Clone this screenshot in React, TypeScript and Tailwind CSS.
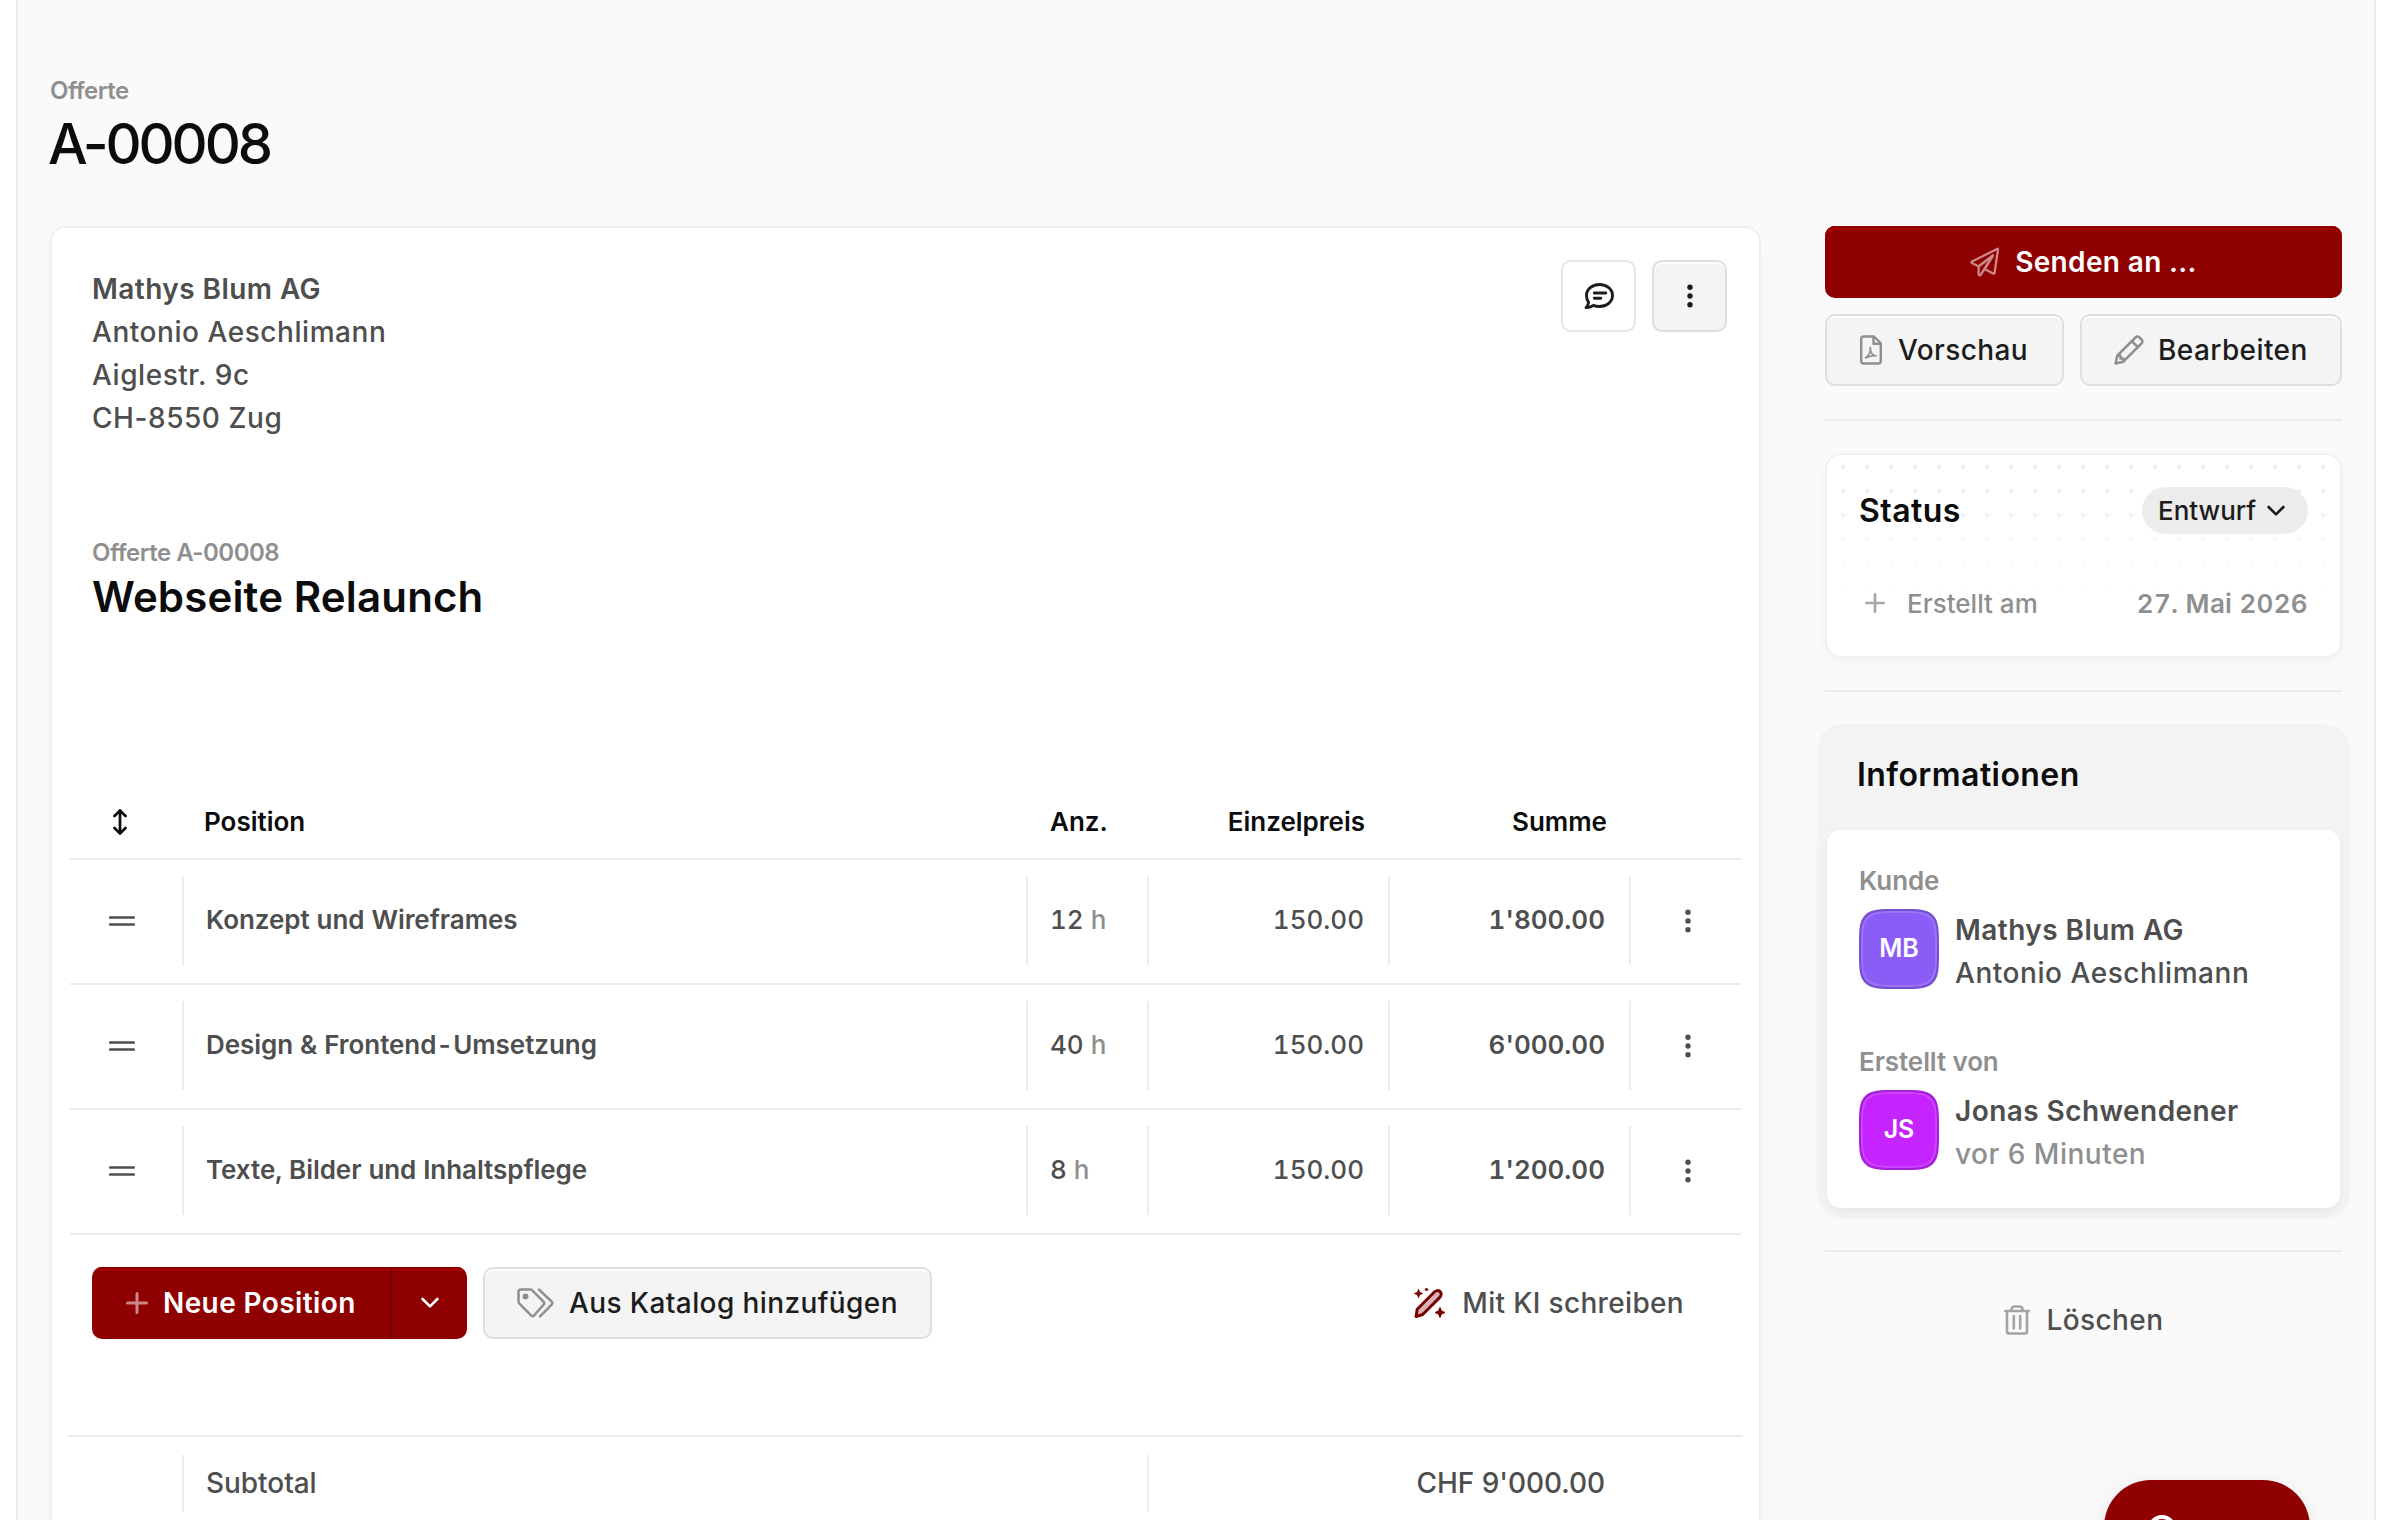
import React from 'react';

interface Position {
  title: string;
  amount: string;
  price: string;
  sum: string;
}

const positions: Position[] = [
  { title: 'Konzept und Wireframes', amount: '12', price: '150.00', sum: "1'800.00" },
  { title: 'Design & Frontend-Umsetzung', amount: '40', price: '150.00', sum: "6'000.00" },
  { title: 'Texte, Bilder und Inhaltspflege', amount: '8', price: '150.00', sum: "1'200.00" },
];

const KebabIcon: React.FC<{ className?: string }> = ({ className }) => (
  <svg className={className} width="6" height="24" viewBox="0 0 6 24" fill="currentColor">
    <circle cx="3" cy="3.200" r="2.700" />
    <circle cx="3" cy="12" r="2.700" />
    <circle cx="3" cy="20.800" r="2.700" />
  </svg>
);

const PlusIcon: React.FC<{ className?: string; size: number }> = ({ className, size }) => (
  <svg className={className} width={size} height={size} viewBox="0 0 22 22" fill="none" stroke="currentColor" strokeWidth="3" strokeLinecap="round">
    <path d="M11 1.500v19M1.500 11h19" />
  </svg>
);

const ChevronIcon: React.FC<{ className?: string }> = ({ className }) => (
  <svg className={className} width="18" height="12" viewBox="0 0 18 12" fill="none" stroke="currentColor" strokeWidth="2.600" strokeLinecap="round" strokeLinejoin="round">
    <path d="M1.600 2l7.400 7.400L16.400 2" />
  </svg>
);

const SecondaryButton: React.FC<{ className?: string; children: React.ReactNode }> = ({ className = '', children }) => (
  <button
    className={`flex items-center h-[72px] shrink-0 rounded-[10px] border-2 border-[#dedede] bg-[#f4f4f4] text-[#1c1c1c] shadow-[inset_0_2px_0_#ffffff] ${className}`}
  >
    {children}
  </button>
);

const Avatar: React.FC<{ initials: string; className: string }> = ({ initials, className }) => (
  <div
    className={`w-20 h-20 shrink-0 flex items-center justify-center rounded-[38px] [corner-shape:squircle] border-2 text-[25px] font-semibold text-white pb-0.5 shadow-[inset_0_0_0_2px_rgba(255,255,255,0.14)] ${className}`}
  >
    {initials}
  </div>
);

const OffertePage: React.FC = () => {
  return (
    <div className="w-[2392px] h-[1520px] overflow-hidden bg-white pl-4 pr-4 font-['Inter',sans-serif] text-[28px] text-[#4e4e4e]">
      <div className="relative h-full border-x-2 border-[#ebebeb] bg-[#fafafa] pl-8 pr-8 pt-[73px]">
        {/* Header */}
        <p className="text-2xl leading-9 font-semibold tracking-[-0.5px] text-[#8f8f8f]">Offerte</p>
        <h1 className="-ml-0.5 text-[56px] leading-[70px] font-medium tracking-[-3.1px] text-[#0c0c0c]">A-00008</h1>

        <div className="mt-[47px] flex items-start gap-16">
          {/* Dokument */}
          <div className="w-[1711px] h-[1400px] shrink-0 rounded-[16px] border-2 border-[#f0f0f0] bg-white shadow-[0_4px_12px_rgba(0,0,0,0.025)]">
            <div className="flex justify-between pl-10 pr-8 pt-8">
              <div className="pt-2 leading-[43px] font-[450] tracking-[0.55px]">
                <p className="font-semibold tracking-[0.44px]">Mathys Blum AG</p>
                <p>Antonio Aeschlimann</p>
                <p>Aiglestr. 9c</p>
                <p>CH-8550 Zug</p>
              </div>
              <div className="flex gap-4">
                <button className="flex h-[72px] w-[75px] items-center justify-center rounded-[10px] border-2 border-[#e6e6e6] bg-white text-[#1c1c1c]">
                  <svg width="30" height="26" viewBox="0 0 30 26" fill="none" stroke="currentColor" strokeWidth="2.900" strokeLinecap="round" strokeLinejoin="round">
                    <path d="M15.500 1.500c7.400 0 13 4.900 13 11s-5.600 11-13 11c-2.300 0-4.300-.4-6.100-1.200-1.800 1.400-4.300 2.300-7.400 2.300 1.400-1.600 2.400-3.600 2.600-5.300-1.400-1.900-2.100-4.200-2.100-6.800 0-6.100 5.600-11 13-11z" />
                    <path d="M10.300 10h11.500M10.300 15.200h6.500" />
                  </svg>
                </button>
                <SecondaryButton className="w-[75px] justify-center">
                  <KebabIcon />
                </SecondaryButton>
              </div>
            </div>

            <div className="mt-[95px] pl-10">
              <p className="text-2xl leading-9 font-semibold tracking-[-0.5px] text-[#8f8f8f]">Offerte A-00008</p>
              <h2 className="text-[42px] leading-[52px] font-semibold tracking-[0.15px] text-[#0c0c0c]">Webseite Relaunch</h2>
            </div>

            {/* Positionen */}
            <div className="mt-[162px] ml-[18px] w-[1671px] text-[26px]">
              <div className="flex h-[75px] items-center border-b-2 border-[#ececec] font-semibold text-[#0c0c0c]">
                <div className="w-28 pl-[43px]">
                  <svg width="14" height="26" viewBox="0 0 14 26" fill="none" stroke="currentColor" strokeWidth="2.700" strokeLinecap="round" strokeLinejoin="round">
                    <path d="M7 1.700v22.600M1.500 7L7 1.500 12.500 7M1.500 19L7 24.500l5.500-5.500" />
                  </svg>
                </div>
                <div className="w-[844px] pl-[22px]">Position</div>
                <div className="w-[121px] pl-6">Anz.</div>
                <div className="w-[241px] pr-[23px] text-right">Einzelpreis</div>
                <div className="w-[241px] pr-[22px] text-right">Summe</div>
              </div>

              {positions.map((p) => (
                <div key={p.title} className="flex h-[125px] items-start border-b-2 border-[#ececec] pt-4 leading-[88px] tabular-nums">
                  <div className="flex h-[89px] w-28 items-center pl-[39px]">
                    <svg width="26" height="10" viewBox="0 0 26 10" fill="none" stroke="currentColor" strokeWidth="2.700" strokeLinecap="round">
                      <path d="M1.300 1.500h23.400M1.300 8.500h23.400" />
                    </svg>
                  </div>
                  <div className="h-[89px] w-[844px] border-l-2 border-[#ececec] pl-[22px] font-semibold tracking-[-0.05px]">{p.title}</div>
                  <div className="h-[89px] w-[121px] border-l-2 border-[#ececec] pl-[22px] font-[450]">
                    {p.amount} <span className="text-[#8f8f8f]">h</span>
                  </div>
                  <div className="h-[89px] w-[241px] border-l-2 border-[#ececec] pr-6 text-right font-[450]">{p.price}</div>
                  <div className="h-[89px] w-[241px] border-l-2 border-[#ececec] pr-6 text-right font-semibold">{p.sum}</div>
                  <div className="flex h-[89px] flex-1 items-center border-l-2 border-[#ececec] pl-[54px]">
                    <KebabIcon />
                  </div>
                </div>
              ))}
            </div>

            {/* Aktionen */}
            <div className="mt-8 flex items-center pl-10 pr-[75px]">
              <div className="flex h-[72px] w-[375px] overflow-hidden rounded-[10px] bg-[#8f0000] text-white">
                <button className="flex w-[300px] items-center border-r-2 border-[#780000] pl-[34px] font-semibold tracking-[0.4px] shadow-[inset_0_2px_0_#8f0000,inset_0_4px_0_#a30000]">
                  <PlusIcon size={22} className="text-[#cc8888]" />
                  <span className="ml-[15px]">Neue Position</span>
                </button>
                <button className="flex flex-1 items-center justify-center shadow-[inset_0_2px_0_#8f0000,inset_0_4px_0_#a30000]">
                  <ChevronIcon />
                </button>
              </div>
              <SecondaryButton className="ml-4 w-[449px] pl-8 font-medium tracking-[0.4px]">
                <svg width="37" height="30" viewBox="0 0 37 30" fill="none" stroke="#8f8f8f" strokeWidth="2.500" strokeLinecap="round" strokeLinejoin="round">
                  <path d="M1.500 3.800c0-1.400.9-2.300 2.300-2.300h9.300c.8 0 1.500.3 2.100.9l11.300 11.200c.9.900.9 2.200 0 3.100L17.200 27.300c-.9.900-2.200.9-3.100 0L2.400 15.700c-.6-.6-.9-1.300-.9-2.100z" />
                  <path d="M22 1.500l12.700 12.100c.9.900.9 2.100 0 3L23 28.300" />
                  <circle cx="8.500" cy="8.500" r="1.700" fill="#8f8f8f" />
                </svg>
                <span className="ml-[15px]">Aus Katalog hinzufügen</span>
              </SecondaryButton>
              <div className="ml-auto flex items-center font-medium tracking-[0.33px]">
                <svg width="31" height="32" viewBox="0 0 31 32" fill="none">
                  <path d="M2 29.500l1.200-7.200L20.600 4.800c1.600-1.600 4.100-1.600 5.500-.2 1.500 1.500 1.500 3.900-.1 5.500L8.700 27.500z" fill="#d9b3b3" stroke="#780000" strokeWidth="2.900" strokeLinejoin="round" />
                  <path d="M4.500 2.500l1.100 2.900 2.900 1.100-2.900 1.100-1.100 2.900-1.100-2.900L.5 6.500l2.900-1.100zM26 20.500l1.500 3.500 3.500 1.500-3.500 1.500-1.500 3.500-1.500-3.500-3.500-1.500 3.500-1.500zM12.500 1l1.500 1.500L12.500 4 11 2.500z" fill="#780000" stroke="#780000" strokeWidth="1" />
                </svg>
                <span className="ml-[17px]">Mit KI schreiben</span>
              </div>
            </div>

            {/* Summen */}
            <div className="mt-24 ml-4 flex w-[1675px] items-start border-t-2 border-[#ececec] pt-[18px] leading-[56px] font-[450] tracking-[-0.05px]">
              <div className="w-[114px]" />
              <div className="h-[57px] w-[965px] border-l-2 border-[#ececec] pl-[22px]">Subtotal</div>
              <div className="h-[57px] w-[482px] border-l-2 border-[#ececec] pr-6 text-right">CHF 9'000.00</div>
            </div>
          </div>

          {/* Seitenleiste */}
          <div className="w-[517px]">
            <button className="flex h-[72px] w-full items-center justify-center rounded-[10px] bg-[#8f0000] font-semibold tracking-[0.35px] text-white shadow-[inset_0_2px_0_#8f0000,inset_0_4px_0_#a30000]">
              <svg width="29" height="30" viewBox="0 0 29 30" fill="none" stroke="#cc8888" strokeWidth="2.300" strokeLinejoin="round" strokeLinecap="round">
                <path d="M27.500 1.800L2 14.500c-.8.500-.7 1.400.1 1.800l6.500 3L23 8.500 14.500 22l8.600 4.500c.7.300 1.400 0 1.500-.7L28 2.400c0-.5-.2-.7-.5-.6z" />
                <path d="M8.600 19.300v7.500c0 1.500 1.400 1.900 2.200.9l3.700-5.700L23 8.500z" />
              </svg>
              <span className="ml-4">Senden an ...</span>
            </button>
            <div className="mt-4 flex gap-4 font-medium tracking-[0.4px]">
              <SecondaryButton className="w-[239px] pl-[33px]">
                <svg width="22" height="30" viewBox="0 0 22 30" fill="none" stroke="#8f8f8f" strokeWidth="2.400" strokeLinejoin="round">
                  <path d="M1.200 4c0-1.500 1-2.500 2.500-2.500h10.300l6.800 6.800V26c0 1.500-1 2.500-2.500 2.500H3.700c-1.500 0-2.500-1-2.500-2.500z" />
                  <path d="M13.500 1.800v7h7" />
                  <path d="M10.200 12.500c1 3.500 0 6.500-4.700 10.500 2-.5 4.500-3 10.500-2.200-3 0-5.500-3-5.800-8.300z" strokeWidth="1.700" />
                </svg>
                <span className="ml-4">Vorschau</span>
              </SecondaryButton>
              <SecondaryButton className="w-[262px] pl-8">
                <svg width="30" height="30" viewBox="0 0 30 30" fill="none" stroke="#8f8f8f" strokeWidth="2.500" strokeLinejoin="round" strokeLinecap="round">
                  <path d="M1.500 28.500l1.800-7.800L21.500 2.500c1.200-1.200 2.800-1.200 4 0l2 2c1.200 1.200 1.200 2.800 0 4L9.300 26.700z" />
                  <path d="M17.800 6.200l6 6M3.500 20.500l3 .3v2.700h2.800l.2 3" />
                </svg>
                <span className="ml-[14px]">Bearbeiten</span>
              </SecondaryButton>
            </div>

            <hr className="mt-[33px] border-t-2 border-[#ececec]" />

            {/* Status */}
            <div className="relative mt-8 h-[205px] rounded-[16px] border-2 border-[#f0f0f0] bg-white px-8 pt-8 shadow-[0_4px_12px_rgba(0,0,0,0.03)]">
              <div className="absolute left-1 top-0 h-[150px] w-[504px] bg-[radial-gradient(circle,#ebebeb_2px,transparent_2.500px)] bg-[size:24px_24px] [mask-image:linear-gradient(to_bottom,black,transparent)]" />
              <div className="relative flex h-[47px] items-center justify-between">
                <h3 className="text-[32px] font-semibold tracking-[0.44px] text-[#0c0c0c]">Status</h3>
                <div className="flex h-[47px] w-[166px] items-center rounded-full bg-[#ececec] pl-4 text-[26px] font-medium text-[#1c1c1c]">
                  Entwurf
                  <ChevronIcon className="ml-[11px]" />
                </div>
              </div>
              <div className="relative mt-[49px] flex h-[40px] items-center text-[26px] text-[#8f8f8f]">
                <PlusIcon size={20} className="ml-[6px] text-[#a8a8a8]" />
                <span className="ml-[22px] font-medium">Erstellt am</span>
                <span className="ml-auto font-semibold tabular-nums tracking-[0.3px]">27. Mai 2026</span>
              </div>
            </div>

            <hr className="mt-8 border-t-2 border-[#ececec]" />

            {/* Informationen */}
            <div className="-mx-2 mt-8 h-[494px] rounded-[26px] bg-[#f3f3f3] px-[10px] shadow-[0_2px_6px_rgba(0,0,0,0.02)]">
              <h3 className="h-[106px] pl-[30px] pt-[25px] text-[32px] leading-[52px] font-semibold tracking-[0.44px] text-[#0c0c0c]">Informationen</h3>
              <div className="h-[378px] rounded-[14px] bg-white px-8 pt-[34px] shadow-[0_4px_10px_rgba(0,0,0,0.05)]">
                <p className="text-[26px] leading-[34px] font-semibold text-[#8f8f8f] tracking-[-0.1px]">Kunde</p>
                <div className="mt-[11px] flex gap-4 leading-[43px]">
                  <Avatar initials="MB" className="border-[#774fd2] bg-[#8b5cf6]" />
                  <div className="font-[450] tracking-[0.55px]">
                    <p className="font-semibold tracking-[0.44px]">Mathys Blum AG</p>
                    <p>Antonio Aeschlimann</p>
                  </div>
                </div>
                <p className="mt-[50px] text-[26px] leading-[34px] font-semibold text-[#8f8f8f] tracking-[-0.1px]">Erstellt von</p>
                <div className="mt-[11px] flex gap-4 leading-[43px]">
                  <Avatar initials="JS" className="border-[#a61fd9] bg-[#c524ff]" />
                  <div className="font-[450] tracking-[0.5px]">
                    <p className="font-semibold tracking-[0.44px]">Jonas Schwendener</p>
                    <p className="text-[#8f8f8f]">vor 6 Minuten</p>
                  </div>
                </div>
              </div>
            </div>

            <hr className="mt-8 border-t-2 border-[#ececec]" />

            <button className="mt-8 flex h-[72px] w-full items-center justify-center font-medium tracking-[0.4px]">
              <svg width="26" height="30" viewBox="0 0 26 30" fill="none" stroke="#a3a3a3" strokeWidth="2.600" strokeLinecap="round" strokeLinejoin="round">
                <path d="M1.300 6h23.400M7 5.800C7.500 3 9 1.500 10.500 1.500h5C17 1.500 18.500 3 19 5.800M3 6v20.500c0 1.200.8 2 2 2h16c1.200 0 2-.8 2-2V6" />
                <path d="M9.800 11v12.500M16.200 11v12.500" />
              </svg>
              <span className="ml-[17px]">Löschen</span>
            </button>
          </div>
        </div>

        {/* Chat-Button */}
        <div className="absolute left-[2086px] top-[1480px] flex h-[96px] w-[206px] items-start rounded-[47px] bg-[#8f0000] pl-11 pt-[35px] shadow-[0_4px_24px_rgba(0,0,0,0.08)]">
          <svg width="28" height="28" viewBox="0 0 28 28" fill="none" stroke="white" strokeWidth="4">
            <circle cx="14" cy="14" r="12" />
          </svg>
        </div>
      </div>
    </div>
  );
};

export default OffertePage;
